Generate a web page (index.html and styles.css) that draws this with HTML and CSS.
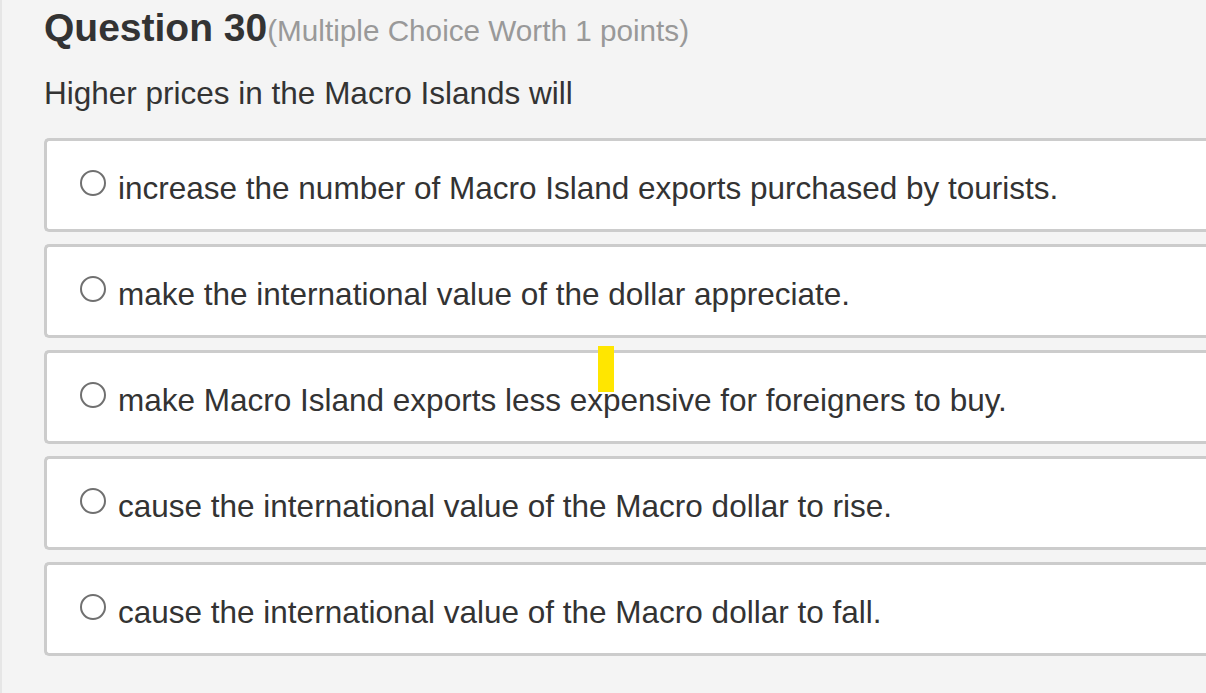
FILE: index.html
```html
<!DOCTYPE html>
<html lang="en">
<head>
<meta charset="utf-8">
<title>Question 30</title>
<link rel="stylesheet" href="styles.css">
</head>
<body>
<main class="page">
  <h1 class="q-title">Question 30<span class="q-meta">(Multiple Choice Worth 1 points)</span></h1>
  <p class="q-text">Higher prices in the Macro Islands will</p>
  <ul class="options">
    <li class="option"><span class="radio"></span><span class="label">increase the number of Macro Island exports purchased by tourists.</span></li>
    <li class="option"><span class="radio"></span><span class="label">make the international value of the dollar appreciate.</span></li>
    <li class="option"><span class="radio"></span><span class="label">make Macro Island exports less expensive for foreigners to buy.</span></li>
    <li class="option"><span class="radio"></span><span class="label">cause the international value of the Macro dollar to rise.</span></li>
    <li class="option"><span class="radio"></span><span class="label">cause the international value of the Macro dollar to fall.</span></li>
  </ul>
  <div class="marker"></div>
</main>
</body>
</html>
```
FILE: styles.css
```css
html, body {
  margin: 0;
  padding: 0;
  height: 100%;
  overflow: hidden;
}
body {
  background: #f4f4f4;
  font-family: "Liberation Sans", Arial, sans-serif;
  color: #333333;
}
.page {
  position: relative;
  min-height: 100%;
  box-sizing: border-box;
  border-left: 2px solid #e6e6e6;
  padding: 5px 0 0 42px;
}
.q-title {
  margin: 0;
  font-size: 39px;
  line-height: 45px;
  font-weight: bold;
  color: #333333;
}
.q-meta {
  font-size: 29.7px;
  font-weight: normal;
  color: #999999;
}
.q-text {
  margin: 22px 0 0;
  font-size: 31.5px;
  line-height: 36px;
}
.options {
  list-style: none;
  margin: 27px 0 0;
  padding: 0;
  display: flex;
  flex-direction: column;
  gap: 12px;
}
.option {
  display: flex;
  align-items: flex-start;
  gap: 12px;
  background: #ffffff;
  border: 3px solid #cccccc;
  border-right: none;
  border-radius: 5px 0 0 5px;
  padding: 29px 0 23px 33px;
  font-size: 31.5px;
  line-height: 36px;
  white-space: nowrap;
}
.radio {
  flex: none;
  width: 22px;
  height: 22px;
  margin-top: 0;
  border: 2px solid #707070;
  border-radius: 50%;
  background: #ffffff;
}
.marker {
  position: absolute;
  left: 596px;
  top: 346px;
  width: 16px;
  height: 46px;
  background: #ffe600;
}
```
